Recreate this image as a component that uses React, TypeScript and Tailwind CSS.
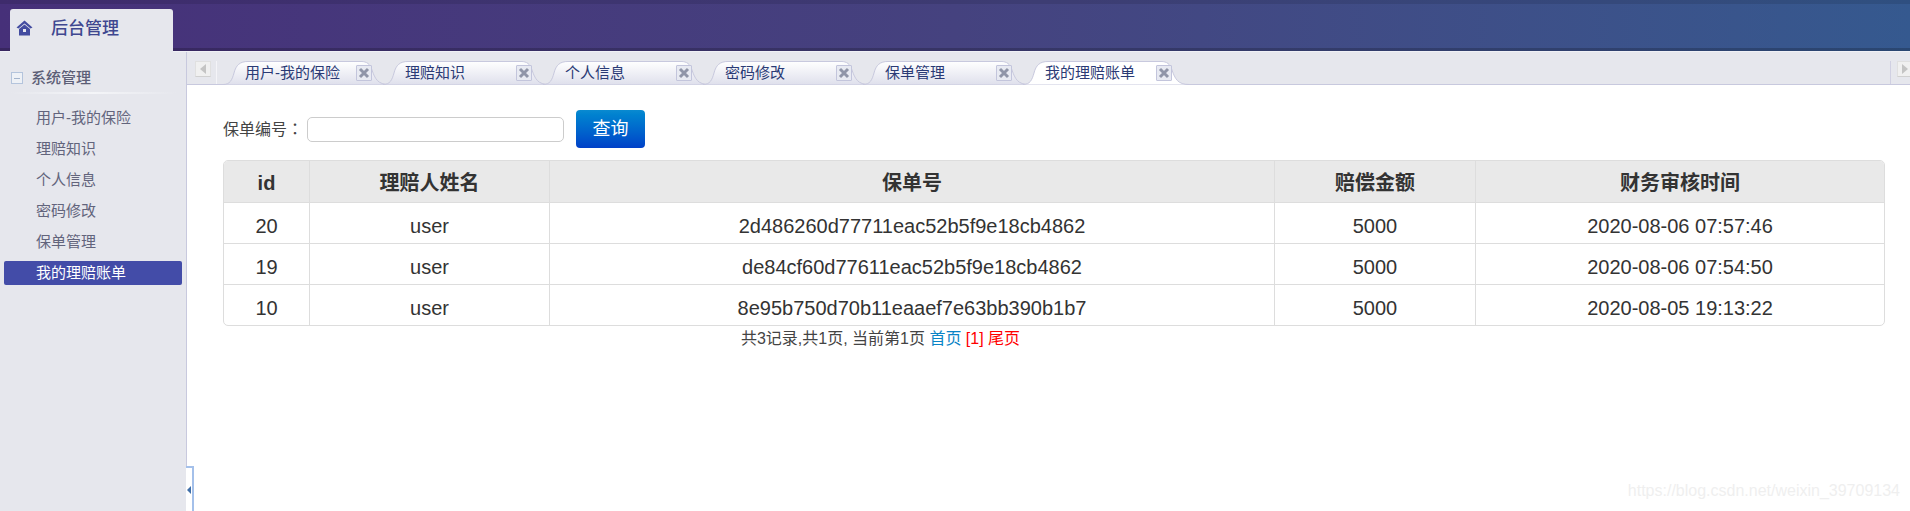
import React from "react";

const FONT = "[font-family:'Liberation_Sans','Noto_Sans_CJK_SC',sans-serif]";
const menu = ["用户-我的保险", "理赔知识", "个人信息", "密码修改", "保单管理", "我的理赔账单"];
const rows = [
  ["20", "user", "2d486260d77711eac52b5f9e18cb4862", "5000", "2020-08-06 07:57:46"],
  ["19", "user", "de84cf60d77611eac52b5f9e18cb4862", "5000", "2020-08-06 07:54:50"],
  ["10", "user", "8e95b750d70b11eaaef7e63bb390b1b7", "5000", "2020-08-05 19:13:22"],
];
const heads = ["id", "理赔人姓名", "保单号", "赔偿金额", "财务审核时间"];
const cols = ["w-[86px]", "w-[240px]", "w-[725px]", "w-[201px]", "flex-1"];

function HomeIcon() {
  return (
    <svg width="17" height="16" viewBox="0 0 17 16" className="shrink-0">
      <path d="M8.5 0.5 L16.5 7.5 L14.5 8.5 L8.5 3.5 L2.5 8.5 L0.5 7.5 Z" fill="#434ca0" />
      <path d="M3 9 L8.5 4.5 L14 9 V15.5 H3 Z" fill="#434ca0" />
      <rect x="7" y="9" width="3" height="3" fill="#e6e7ed" />
    </svg>
  );
}

function CloseBox() {
  return (
    <span className="flex h-[16px] w-[16px] items-center justify-center rounded-[1px] border border-[#c3c5dc] bg-[#e8eaf2]">
      <svg width="12" height="12" viewBox="0 0 12 12">
        <path d="M2 2 L10 10 M10 2 L2 10" stroke="#9095a8" strokeWidth="3" />
      </svg>
    </span>
  );
}

function Arrow({ dir }: { dir: "l" | "r" }) {
  return (
    <span className="flex h-[16px] w-[16px] items-center justify-center border border-[#e0e0e0] border-b-[#d0d0d0] bg-[#f0f0f0]">
      <svg width="6" height="10" viewBox="0 0 6 10">
        <path d={dir === "l" ? "M6 0 L0 5 L6 10 Z" : "M0 0 L6 5 L0 10 Z"} fill="#c4c4c4" />
      </svg>
    </span>
  );
}

function Tab({ label, active, i }: { label: string; active?: boolean; i: number }) {
  return (
    <div className="relative h-[24px] w-[160px] shrink-0">
      <svg width="166" height="24" viewBox="0 0 166 24" className="absolute left-0 top-0">
        <defs>
          <linearGradient id={"tg" + i} x1="0" y1="0" x2="0" y2="1">
            <stop offset="0" stopColor="#ffffff" />
            <stop offset="1" stopColor={active ? "#ffffff" : "#dfe0ec"} />
          </linearGradient>
        </defs>
        <path
          d="M0 23.5 C7 23.5 9 19 11 12 C13 4 17 0.5 25 0.5 H138 C144 0.5 147 3 149 9 C152 18 155 23.5 166 23.5"
          fill={"url(#tg" + i + ")"}
          stroke="#c8c9de"
          strokeWidth="1"
        />
      </svg>
      <span className="absolute left-[22px] top-[2px] text-[15px] leading-[20px] whitespace-nowrap text-[#2a3a75]">
        {label}
      </span>
      <span className="absolute left-[133px] top-[4px]">
        <CloseBox />
      </span>
    </div>
  );
}

export default function App() {
  return (
    <div className={`flex h-[511px] w-[1910px] flex-col overflow-hidden bg-white ${FONT}`}>
      <header className="relative h-[52px] shrink-0 border-b-[1px] border-[#f0f1f6] bg-gradient-to-r from-[#463079] via-[#45427f] to-[#35598f]">
        <div className="h-[4px] bg-black/10" />
        <div className="absolute bottom-0 left-0 right-0 h-[3px] bg-black/20" />
        <div className="absolute bottom-[-1px] left-[10px] z-10 h-[43px] w-[163px] rounded-t-[3px] bg-[#e6e7ed]">
          <div className="flex h-[39px] items-center pl-[6px]">
            <span className="-mt-[2px]">
              <HomeIcon />
            </span>
            <span className="ml-[18px] text-[17px] font-medium text-[#3f4790]">后台管理</span>
          </div>
        </div>
      </header>

      <div className="flex min-h-0 flex-1">
        <aside className="relative w-[187px] shrink-0 border-r border-[#c8c9de] bg-[#e6e7ed]">
          <div className="ml-[11px] mt-[15px] flex h-[22px] items-center">
            <span className="flex h-[12px] w-[12px] items-center justify-center border border-[#b4c4dc] bg-[#eef1f6]">
              <span className="h-[1px] w-[6px] bg-[#a4b4cc]" />
            </span>
            <span className="ml-[8px] text-[15px] font-medium text-[#5c5e76]">系统管理</span>
          </div>
          <div className="mx-[10px] mt-[3px] h-[2px] bg-gradient-to-r from-[#e6e7ed] via-[#f4f5f8] to-[#e6e7ed]" />
          <ul className="mt-[12px] flex flex-col gap-[7px] px-[4px]">
            {menu.map((m, i) => (
              <li
                key={m}
                className={`h-[24px] rounded-[2px] pl-[32px] text-[15px] leading-[24px] ${
                  i === menu.length - 1 ? "bg-[#434ca8] text-white" : "text-[#62647c]"
                }`}
              >
                {m}
              </li>
            ))}
          </ul>
          <div className="absolute bottom-0 left-[186px] z-10 flex h-[45px] w-[8px] items-center justify-center border-r-2 border-t-2 border-[#a4c0ea] bg-white">
            <svg width="4" height="8" viewBox="0 0 4 8">
              <path d="M4 0 L0 4 L4 8 Z" fill="#3f6ea8" />
            </svg>
          </div>
        </aside>

        <main className="flex min-w-0 flex-1 flex-col">
          <div className="flex h-[33px] shrink-0 border-b border-[#c8c9de] bg-[#e6e7ed]">
            <div className="ml-[8px] mt-[9px]">
              <Arrow dir="l" />
            </div>
            <div className="ml-[5px] mt-[9px] h-[23px] w-px bg-[#f4f4f8]" />
            <div className="ml-[6px] mt-[9px] flex">
              {menu.map((m, i) => (
                <Tab key={m} label={m} i={i} active={i === menu.length - 1} />
              ))}
            </div>
            <div className="ml-auto mt-[9px] h-[23px] w-px bg-[#d0d0e2]" />
            <div className="-mr-[3px] ml-[6px] mt-[9px]">
              <Arrow dir="r" />
            </div>
          </div>

          <div className="relative flex-1 px-[36px] text-[#333]">
            <div className="mt-[25px] flex h-[38px] items-center text-[15px]">
              <span className="w-[84px] text-[16px] text-[#444]">
                保单编号<span className="[font-family:'Noto_Sans_CJK_TC',sans-serif]">：</span>
              </span>
              <input className="h-[25px] w-[257px] rounded-[5px] border border-[#ccc] bg-white" />
              <button className="ml-[12px] h-[38px] w-[69px] rounded-[4px] bg-gradient-to-b from-[#0a8ad0] to-[#0040c8] text-[18px] text-white">
                查询
              </button>
            </div>

            <div className="mt-[12px] w-[1662px] overflow-hidden rounded-[5px] border border-[#ddd]">
              <div className="flex h-[41px] bg-[#e9e9e9] text-[#333]">
                {heads.map((h, i) => (
                  <div
                    key={h}
                    className={`${cols[i]} flex items-center justify-center border-r border-[#ddd] pt-[2px] text-[20px] font-bold last:border-r-0`}
                  >
                    {h}
                  </div>
                ))}
              </div>
              {rows.map((r) => (
                <div key={r[0]} className="flex h-[41px] border-t border-[#ddd] text-[20px] text-[#333]">
                  {r.map((c, i) => (
                    <div
                      key={i}
                      className={`${cols[i]} flex items-center justify-center border-r border-[#ddd] pt-[6px] last:border-r-0`}
                    >
                      {c}
                    </div>
                  ))}
                </div>
              ))}
            </div>

            <div className="mt-[3px] w-[1315px] text-center text-[16px] leading-[20px] text-[#444]">
              共3记录,共1页, 当前第1页 <span className="text-[#0a84c6]">首页</span>{" "}
              <span className="text-[#f00]">[1] 尾页</span>
            </div>

            <div className="absolute bottom-[8px] right-[10px] text-[16px] text-[#efefef]">
              https://blog.csdn.net/weixin_39709134
            </div>
          </div>
        </main>
      </div>
    </div>
  );
}
